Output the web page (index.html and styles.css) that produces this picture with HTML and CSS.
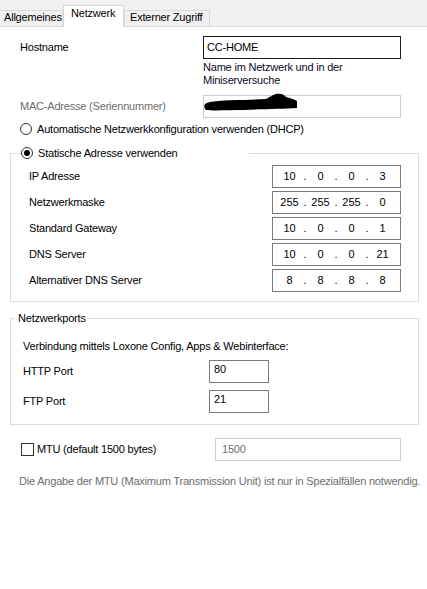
FILE: index.html
```html
<!DOCTYPE html>
<html lang="de">
<head>
<meta charset="utf-8">
<title>Netzwerk</title>
<link rel="stylesheet" href="styles.css">
</head>
<body>
<div class="tabs">
  <div class="tab">Allgemeines</div>
  <div class="tab active">Netzwerk</div>
  <div class="tab">Externer Zugriff</div>
</div>
<div class="page">
  <div class="row host-row">
    <span class="label">Hostname</span>
    <div class="input dark host">CC-HOME</div>
  </div>
  <div class="hint">Name im Netzwerk und in der<br>Miniserversuche</div>
  <div class="row mac-row">
    <span class="label gray">MAC-Adresse (Seriennummer)</span>
    <div class="input light mac">
      <svg class="redact" width="100" height="20" viewBox="0 -4 100 20"><path d="M1,8 C5,5 20,4 40,4 L62,3 C66,1 68,-1 72,-2 C76,-3 80,-2 82,1 C86,2 90,3 93,5 L93,12 C80,13 60,13 40,14 C25,14 10,15 2,14 C0,12 0,10 1,8 Z" fill="#000"/></svg>
    </div>
  </div>
  <div class="radio-line dhcp"><span class="radio"></span><span>Automatische Netzwerkkonfiguration verwenden (DHCP)</span></div>

  <fieldset class="group static">
    <legend class="static-legend"><span class="radio checked"></span><span>Statische Adresse verwenden</span></legend>
    <div class="ip-row"><span class="ip-label">IP Adresse</span><div class="input ip"><span class="oct">10</span><span class="dot">.</span><span class="oct">0</span><span class="dot">.</span><span class="oct">0</span><span class="dot">.</span><span class="oct">3</span></div></div>
    <div class="ip-row"><span class="ip-label">Netzwerkmaske</span><div class="input ip"><span class="oct">255</span><span class="dot">.</span><span class="oct">255</span><span class="dot">.</span><span class="oct">255</span><span class="dot">.</span><span class="oct">0</span></div></div>
    <div class="ip-row"><span class="ip-label">Standard Gateway</span><div class="input ip"><span class="oct">10</span><span class="dot">.</span><span class="oct">0</span><span class="dot">.</span><span class="oct">0</span><span class="dot">.</span><span class="oct">1</span></div></div>
    <div class="ip-row"><span class="ip-label">DNS Server</span><div class="input ip"><span class="oct">10</span><span class="dot">.</span><span class="oct">0</span><span class="dot">.</span><span class="oct">0</span><span class="dot">.</span><span class="oct">21</span></div></div>
    <div class="ip-row"><span class="ip-label">Alternativer DNS Server</span><div class="input ip"><span class="oct">8</span><span class="dot">.</span><span class="oct">8</span><span class="dot">.</span><span class="oct">8</span><span class="dot">.</span><span class="oct">8</span></div></div>
  </fieldset>

  <fieldset class="group ports">
    <legend class="ports-legend">Netzwerkports</legend>
    <div class="ports-intro">Verbindung mittels Loxone Config, Apps &amp; Webinterface:</div>
    <div class="port-row"><span class="port-label">HTTP Port</span><div class="input port">80</div></div>
    <div class="port-row"><span class="port-label">FTP Port</span><div class="input port">21</div></div>
  </fieldset>

  <div class="mtu-row">
    <div class="check-line"><span class="checkbox"></span><span>MTU (default 1500 bytes)</span></div>
    <div class="input light mtu">1500</div>
  </div>
  <div class="note">Die Angabe der MTU (Maximum Transmission Unit) ist nur in Spezialfällen notwendig.</div>
</div>
</body>
</html>
```
FILE: styles.css
```css
* { box-sizing: border-box; }

html, body {
  margin: 0;
  padding: 0;
  background: #ffffff;
}

body {
  width: 427px;
  height: 589px;
  overflow: hidden;
  font-family: "Liberation Sans", Arial, sans-serif;
  font-size: 11px;
  letter-spacing: -0.2px;
  color: #000;
  line-height: 13px;
}

/* Tabs */
.tabs {
  display: flex;
  align-items: flex-end;
  height: 27px;
  background: #f0f0f0;
  border-bottom: 1px solid #d9d9d9;
}

.tab {
  height: 16px;
  padding: 0 5px 2px 5px;
  display: flex;
  align-items: flex-end;
  background: #f0f0f0;
  border: 1px solid #d9d9d9;
  border-bottom: none;
  margin-right: -1px;
  line-height: 13px;
}

.tab:first-child { border-left: none; padding-left: 4px; width: 63px; }
.tab:last-child { width: 86px; padding-left: 5px; }

.tab.active {
  position: relative;
  z-index: 1;
  height: 22px;
  width: 61px;
  margin-bottom: -1px;
  background: #fff;
  padding: 0 0 7px 7px;
  margin-left: 1px;
  margin-right: 0;
}

/* Page */
.page { padding-top: 9px; }

.row {
  display: flex;
  align-items: center;
  height: 23px;
  padding-left: 20px;
}

.label { width: 183px; }
.gray { color: #6d6d6d; }

.input {
  height: 23px;
  border: 1px solid #7a7a7a;
  background: #fff;
  display: flex;
  align-items: center;
  padding: 0 3px 1px;
}

.input.dark { border-color: #1a1a1a; }
.input.light { border-color: #cccccc; }

.host { width: 198px; }

.hint {
  margin-top: 2px;
  padding-left: 203px;
  color: #0a0a1e;
}

.mac-row { margin-top: 8px; }
.mac { width: 198px; position: relative; }
.redact {
  position: absolute;
  left: 0;
  top: -4px;
  overflow: visible;
}

.radio-line {
  display: flex;
  align-items: center;
  height: 16px;
  padding-left: 20px;
  margin-top: 3px;
}

.radio {
  width: 12px;
  height: 12px;
  border: 1px solid #333;
  border-radius: 50%;
  background: #fff;
  margin-right: 5px;
  flex: none;
  display: flex;
  align-items: center;
  justify-content: center;
}

.radio.checked::after {
  content: "";
  width: 6px;
  height: 6px;
  border-radius: 50%;
  background: #000;
}

/* Group boxes */
.group {
  margin: 0 0 0 10px;
  width: 409px;
  border: 1px solid #dcdcdc;
  padding: 0;
  min-width: 0;
}

.static { margin-top: 8px; padding-bottom: 9px; }

.static-legend {
  display: flex;
  align-items: center;
  height: 16px;
  width: 228px;
  padding: 0;
  margin-left: 10px;
}

.ip-row {
  display: flex;
  align-items: center;
  height: 23px;
  margin-top: 3px;
  padding-left: 18px;
}

.ip-row:first-of-type { margin-top: 4px; }

.ip-label { width: 243px; }

.ip {
  width: 129px;
  padding: 0 0 1px 3px;
  letter-spacing: 0;
  justify-content: flex-start;
}

.oct {
  width: 27px;
  text-align: center;
}

.dot {
  width: 4px;
  text-align: center;
}

.ports { margin-top: 10px; padding-bottom: 11px; }

.ports-legend {
  margin-left: 3px;
  padding: 0 1px 0 4px;
  height: 13px;
}

.ports-intro {
  margin-top: 15px;
  padding-left: 12px;
}

.port-row {
  display: flex;
  align-items: center;
  height: 23px;
  margin-top: 7px;
  padding-left: 12px;
}

.port-label { width: 186px; }

.port {
  width: 60px;
  padding: 0 4px 4px;
}

/* MTU */
.mtu-row {
  display: flex;
  align-items: center;
  height: 23px;
  margin-top: 13px;
  padding-left: 21px;
}

.check-line {
  display: flex;
  align-items: center;
  width: 194px;
}

.checkbox {
  width: 13px;
  height: 13px;
  border: 1px solid #333;
  background: #fff;
  margin-right: 3px;
  flex: none;
}

.mtu {
  width: 186px;
  color: #6d6d6d;
  padding-left: 6px;
}

.note {
  margin-top: 14px;
  padding-left: 19px;
  color: #6d6d6d;
  white-space: nowrap;
}
```
